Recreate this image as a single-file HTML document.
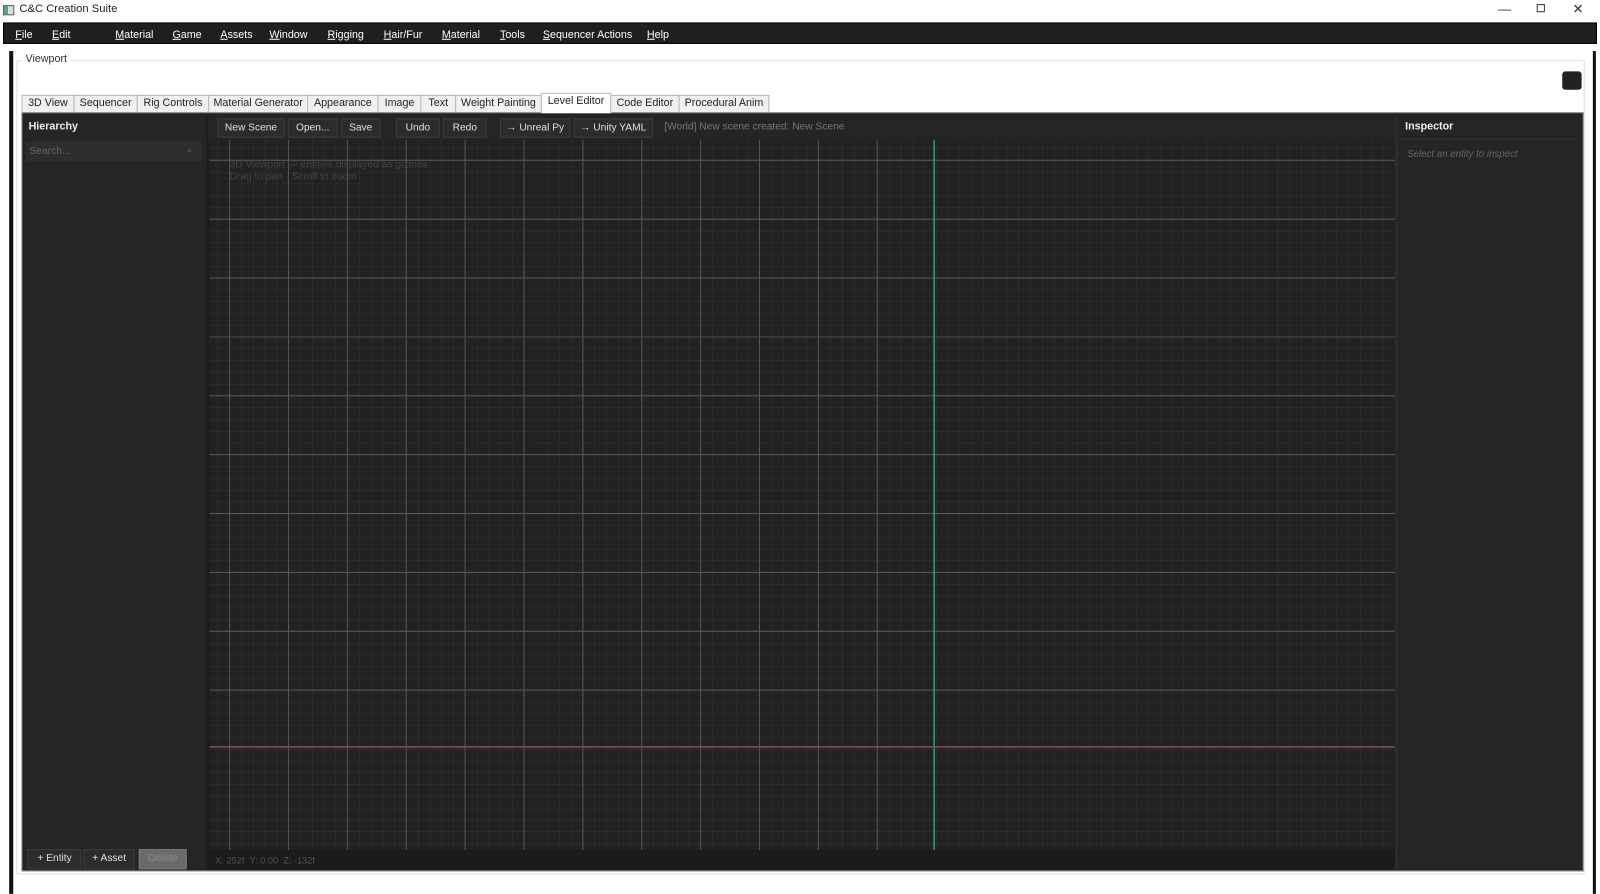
<!DOCTYPE html>
<html><head><meta charset="utf-8"><style>
*{box-sizing:border-box;margin:0;padding:0}
body{width:1600px;height:876px;background:#fff;font-family:"Segoe UI","Liberation Sans",sans-serif;font-size:11px;position:relative;overflow:hidden;color:#000}
#w{position:absolute;left:0;top:0;width:1568px;height:859px;transform:scale(1.0204);transform-origin:0 0}
.a{position:absolute}
.menu span{position:absolute;top:5px;color:#fff;font-size:10.5px}
.menu u{text-decoration:underline}
.tab{position:absolute;top:93px;height:17px;border:1px solid #b8b8b8;border-bottom:none;background:#f0f0f0;font-size:10.5px;text-align:center;line-height:15px;color:#222;white-space:nowrap;overflow:hidden}
.btn{position:absolute;top:116px;height:19px;background:#2c2c2c;border:1px solid #3c3c3c;color:#e0e0e0;font-size:10px;text-align:center;line-height:17px;white-space:nowrap}
.bb{position:absolute;top:832px;height:20px;background:#2c2c2c;border:1px solid #3c3c3c;color:#e0e0e0;font-size:10px;text-align:center;line-height:18px}
</style></head><body><div id="w">
<div class="a" style="left:0;top:0;width:1568px;height:22px;background:#fff"></div>
<div class="a" style="left:3px;top:5px;width:11px;height:10px;border:1px solid #555;background:linear-gradient(90deg,#4a8 0 40%,#ddd 40%)"></div>
<div class="a" style="left:19px;top:3px;font-size:11px;color:#222">C&amp;C Creation Suite</div>
<div class="a" style="left:1468px;top:1px;font-size:13px;color:#333">—</div>
<div class="a" style="left:1506px;top:4px;width:8px;height:8px;border:1px solid #333"></div>
<div class="a" style="left:1541px;top:1px;font-size:13px;color:#333">✕</div>
<div class="a menu" style="left:3px;top:22px;width:1562px;height:21px;background:#1f1f1f;border:1px solid #000">
<span style="left:11px"><u>F</u>ile</span><span style="left:47px"><u>E</u>dit</span><span style="left:109px"><u>M</u>aterial</span><span style="left:165px"><u>G</u>ame</span><span style="left:212px"><u>A</u>ssets</span><span style="left:260px"><u>W</u>indow</span><span style="left:317px"><u>R</u>igging</span><span style="left:372px"><u>H</u>air/Fur</span><span style="left:429px"><u>M</u>aterial</span><span style="left:486px"><u>T</u>ools</span><span style="left:528px"><u>S</u>equencer Actions</span><span style="left:630px"><u>H</u>elp</span>
</div>
<div class="a" style="left:9px;top:50px;width:4px;height:826px;background:#111"></div>
<div class="a" style="left:1561px;top:50px;width:3px;height:826px;background:#111"></div>
<div class="a" style="left:16px;top:59px;width:1537px;height:798px;border:1px solid #d8dde2;border-radius:2px"></div>
<div class="a" style="left:22px;top:52px;padding:0 3px;background:#fff;font-size:10.5px;color:#333">Viewport</div>
<div class="a" style="left:1531px;top:70px;width:19px;height:18px;background:#222;border-radius:3px"></div>
<div class="tab" style="left:21px;width:52px">3D View</div>
<div class="tab" style="left:72px;width:63px">Sequencer</div>
<div class="tab" style="left:134px;width:71px">Rig Controls</div>
<div class="tab" style="left:204px;width:98px">Material Generator</div>
<div class="tab" style="left:301px;width:70px">Appearance</div>
<div class="tab" style="left:370px;width:43px">Image</div>
<div class="tab" style="left:412px;width:35px">Text</div>
<div class="tab" style="left:446px;width:85px">Weight Painting</div>
<div class="tab" style="left:530px;top:91px;height:20px;width:69px;background:#fff;z-index:2">Level Editor</div>
<div class="tab" style="left:598px;width:68px">Code Editor</div>
<div class="tab" style="left:665px;width:89px">Procedural Anim</div>
<div class="a" style="left:21px;top:110px;width:1531px;height:744px;background:#1c1c1c;border:1px solid #999"></div>
<div class="a" style="left:23px;top:112px;width:179px;height:740px;background:#252525"></div>
<div class="a" style="left:28px;top:118px;color:#eee;font-weight:bold;font-size:10.5px">Hierarchy</div>
<div class="a" style="left:25px;top:139px;width:173px;height:19px;background:#2d2d2d;border-radius:2px"></div>
<div class="a" style="left:29px;top:143px;color:#666;font-size:10px">Search...</div>
<div class="a" style="left:183px;top:142px;color:#666;font-size:10px">⌕</div>
<div class="bb" style="left:27px;width:53px">+ Entity</div>
<div class="bb" style="left:82px;width:50px">+ Asset</div>
<div class="bb" style="left:136px;width:47px;background:#6a6a6a;border-color:#777;color:#888">Delete</div>
<div class="a" style="left:204px;top:112px;width:1164px;height:25px;background:#252525"></div>
<div class="btn" style="left:213px;width:66px">New Scene</div>
<div class="btn" style="left:282px;width:49px">Open...</div>
<div class="btn" style="left:334px;width:39px">Save</div>
<div class="btn" style="left:388px;width:43px">Undo</div>
<div class="btn" style="left:434px;width:43px">Redo</div>
<div class="btn" style="left:490px;width:69px">→ Unreal Py</div>
<div class="btn" style="left:562px;width:78px">→ Unity YAML</div>
<div class="a" style="left:651px;top:119px;color:#777;font-size:10px">[World] New scene created: New Scene</div>
<svg class="a" style="left:205px;top:137px" width="1162" height="696">
<defs><pattern id="p" patternUnits="userSpaceOnUse" x="-3.08" y="-3.08" width="11.54" height="11.54"><path d="M0 0H11.54M0 0V11.54" stroke="#333" stroke-width="1" fill="none"/></pattern></defs>
<rect width="1162" height="696" fill="#222"/>
<rect width="1162" height="696" fill="url(#p)"/>
<g stroke="#555" stroke-width="1">
<path d="M20 0V696M77.7 0V696M135.4 0V696M193.1 0V696M250.8 0V696M308.5 0V696M366.2 0V696M423.9 0V696M481.6 0V696M539.3 0V696M597 0V696M654.7 0V696"/>
</g>
<g stroke="#5a5a5a" stroke-width="1">
<path d="M0 20H1162M0 77.7H1162M0 135.4H1162M0 250.8H1162M0 308.5H1162M0 366.2H1162M0 423.9H1162M0 481.6H1162M0 539.3H1162"/>
<path d="M0 193.1H1162" stroke="#4a4a4a"/>
</g>
<path d="M710.5 0V696" stroke="#3a9a7a" stroke-width="1.5"/>
<path d="M0 595H1162" stroke="#7a5050" stroke-width="1.5"/>
<text x="20" y="27" fill="#444" font-size="10" font-family="Liberation Sans">3D Viewport — entities displayed as gizmos</text>
<text x="20" y="39" fill="#444" font-size="10" font-family="Liberation Sans">Drag to pan · Scroll to zoom</text>
</svg>
<div class="a" style="left:204px;top:833px;width:1164px;height:19px;background:#1b1b1b"></div>
<div class="a" style="left:211px;top:838px;color:#555;font-size:9px">X: 252f &nbsp;Y: 0.00 &nbsp;Z: -132f</div>
<div class="a" style="left:1367px;top:112px;width:3px;height:740px;background:#2d2d2d"></div>
<div class="a" style="left:1370px;top:112px;width:180px;height:740px;background:#252525"></div>
<div class="a" style="left:1370px;top:136px;width:180px;height:1px;background:#2f2f2f"></div>
<div class="a" style="left:1377px;top:118px;color:#eee;font-weight:bold;font-size:10.5px">Inspector</div>
<div class="a" style="left:1379px;top:146px;color:#666;font-style:italic;font-size:9.5px">Select an entity to inspect</div>
</div></body></html>
